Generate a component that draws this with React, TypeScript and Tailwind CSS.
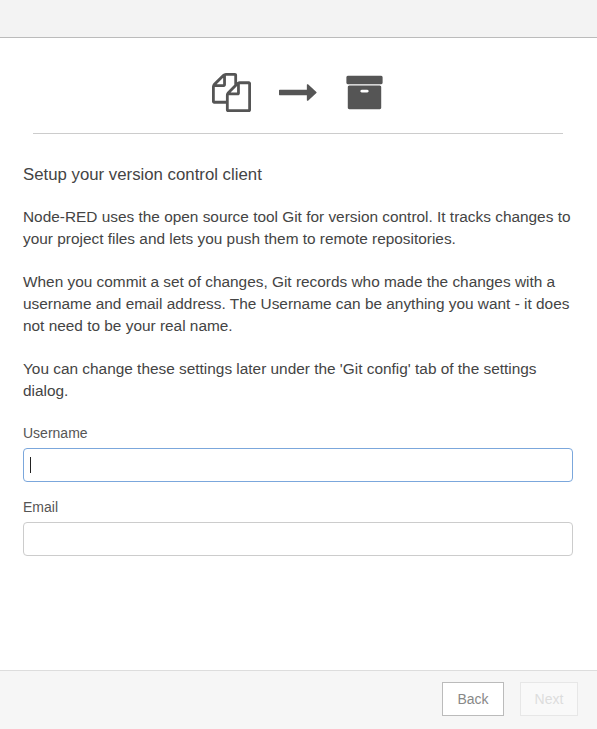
function FilesIcon() {
  return (
    <svg viewBox="0 0 1792 1792" fill="#555" className="block size-[39px]">
      <path d="M1696 384q40 0 68 28t28 68v1216q0 40-28 68t-68 28h-960q-40 0-68-28t-28-68v-288h-544q-40 0-68-28t-28-68v-672q0-40 20-88t48-76l408-408q28-28 76-48t88-20h416q40 0 68 28t28 68v328q68-40 128-40h416zm-544 213l-299 299h299v-299zm-640-384l-299 299h299v-299zm196 647l316-316v-416h-384v416q0 40-28 68t-68 28h-416v640h512v-256q0-40 20-88t48-76zm956 804v-1152h-384v416q0 40-28 68t-68 28h-416v640h896z" />
    </svg>
  );
}

function ArrowIcon() {
  return (
    <svg viewBox="0 0 1792 1792" fill="#555" className="block size-[39px]">
      <path d="M1728 893q0 14-10 24l-384 354q-16 14-35 6-19-9-19-29v-224h-1248q-14 0-23-9t-9-23v-192q0-14 9-23t23-9h1248v-224q0-21 19-29t35 5l384 350q10 10 10 23z" />
    </svg>
  );
}

function ArchiveIcon() {
  return (
    <svg viewBox="0 0 1792 1792" fill="#555" className="block size-[39px]">
      <path d="M1088 832q0-26-19-45t-45-19h-256q-26 0-45 19t-19 45 19 45 45 19h256q26 0 45-19t19-45zm576-192v960q0 26-19 45t-45 19h-1408q-26 0-45-19t-19-45v-960q0-26 19-45t45-19h1408q26 0 45 19t19 45zm64-448v256q0 26-19 45t-45 19h-1536q-26 0-45-19t-19-45v-256q0-26 19-45t45-19h1536q26 0 45 19t19 45z" />
    </svg>
  );
}

export default function App() {
  return (
    <div className="flex h-[729px] w-[597px] flex-col bg-white font-['Liberation_Sans',Arial,sans-serif] text-[#444]">
      <header className="h-[38px] shrink-0 border-b border-[#bbb] bg-[#f3f3f3]" />
      <main className="flex-1 pr-6 pl-[23px]">
        <div className="mx-[10px] flex h-24 justify-center border-b border-[#ccc] pt-[35px]">
          <div className="flex gap-[27.5px]">
            <FilesIcon />
            <ArrowIcon />
            <ArchiveIcon />
          </div>
        </div>
        <h1 className="mt-[30px] text-[16.8px] leading-[22px]">Setup your version control client</h1>
        <div className="mt-5 flex flex-col gap-[21px] text-[15.4px] leading-[22px] whitespace-nowrap">
          <p>
            Node-RED uses the open source tool Git for version control. It tracks changes to
            <br />
            your project files and lets you push them to remote repositories.
          </p>
          <p>
            When you commit a set of changes, Git records who made the changes with a
            <br />
            username and email address. The Username can be anything you want - it does
            <br />
            not need to be your real name.
          </p>
          <p>
            You can change these settings later under the 'Git config' tab of the settings
            <br />
            dialog.
          </p>
        </div>
        <form className="mt-[21px] text-[14px] leading-5 text-[#555]">
          <label className="block">Username</label>
          <div className="mt-[5px] flex h-[34px] items-center rounded-[4px] border border-[#7ba7dc] pl-[6px]">
            <span className="h-4 w-px bg-[#222]" />
          </div>
          <label className="mt-[15px] block">Email</label>
          <div className="mt-[5px] h-[34px] rounded-[4px] border border-[#ccc]" />
        </form>
      </main>
      <footer className="flex h-[59px] shrink-0 justify-end gap-4 border-t border-[#ddd] bg-[#f6f6f6] pt-[11px] pr-[19px] text-[14px]">
        <button className="h-[34px] w-[62px] border border-[#bbb] bg-white text-[#888]">Back</button>
        <button className="h-[34px] w-[58px] border border-[#e7e7e7] bg-[#f9f9f9] text-[#ddd]">Next</button>
      </footer>
    </div>
  );
}
